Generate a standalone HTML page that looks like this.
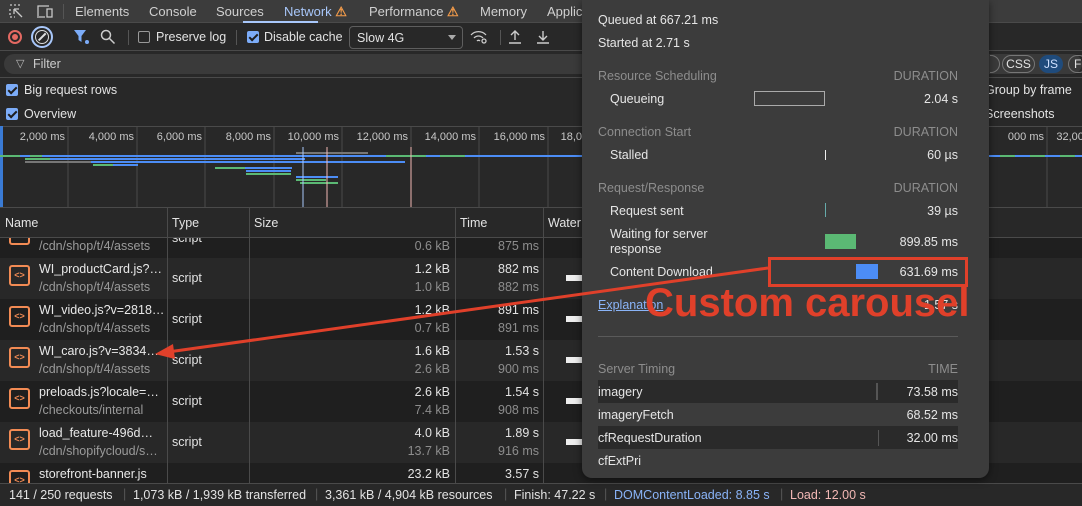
<!DOCTYPE html>
<html><head><meta charset="utf-8"><style>
*{box-sizing:border-box;margin:0;padding:0}
body{width:1082px;height:506px;overflow:hidden;background:#282828;font-family:"Liberation Sans",sans-serif;font-size:12.5px;color:#e3e3e3;position:relative}
.abs{position:absolute}
.tabs{top:0;left:0;width:1082px;height:23px;background:#3c3c3c;border-bottom:1px solid #4a4a4a}
.tabs span{position:absolute;top:4px;font-size:13px;color:#d0d0d0}
.tb{top:24px;left:0;width:1082px;height:27px;background:#282828;border-bottom:1px solid #4a4a4a}
.cb{display:inline-block;width:12px;height:12px;border-radius:2px;background:#7cacf8;position:absolute}
.cb:after{content:"";position:absolute;left:4px;top:1px;width:3px;height:7px;border:solid #1e1e1e;border-width:0 2px 2px 0;transform:rotate(45deg)}
.row{position:absolute;left:0;width:1082px;height:41px}
.ic{position:absolute;left:9px;width:21px;height:21px;border:2px solid #f28b54;border-radius:3px;color:#f28b54;font-size:9px;font-weight:bold;text-align:center;line-height:17px}
.n1{position:absolute;left:39px;color:#e8e8e8}
.n2{position:absolute;left:39px;color:#9a9a9a}
.r{position:absolute;text-align:right}
.pop{left:582px;top:0;width:407px;height:478px;background:#3c3c3c;border-radius:0 0 10px 10px;box-shadow:0 2px 8px rgba(0,0,0,.5)}
.pop div{position:absolute}
.g{color:#8d8d8d}
.w{color:#e6e6e6}
</style></head><body>
<div class="abs tabs">
<svg class="abs" style="left:9px;top:4px" width="16" height="16" viewBox="0 0 16 16" fill="none" stroke="#c8c8c8" stroke-width="1.3"><path d="M1 1h2M5 1h2M9 1h2M1 5v2M1 9v2M1 13h2M5 13h1M5 5l8 8M5 5h5M5 5v5"/></svg>
<svg class="abs" style="left:36px;top:4px" width="18" height="15" viewBox="0 0 18 15" fill="none" stroke="#c8c8c8" stroke-width="1.3"><path d="M2 12V2h11M1 13h8M11 5h5v8h-5z"/></svg>
<div class="abs" style="left:63px;top:4px;width:1px;height:15px;background:#555"></div>
<span style="left:75px">Elements</span><span style="left:149px">Console</span><span style="left:216px">Sources</span>
<span style="left:284px;color:#a8c7fa">Network <b style="color:#f29b4a">⚠</b></span>
<span style="left:369px">Performance <b style="color:#f29b4a">⚠</b></span><span style="left:480px">Memory</span><span style="left:547px">Applic</span>
<div class="abs" style="left:243px;top:21px;width:75px;height:2px;background:#a8c7fa"></div>
</div>
<div class="abs tb">
<div class="abs" style="left:8px;top:6px;width:14px;height:14px;border-radius:50%;border:2px solid #e46962"><div class="abs" style="left:2px;top:2px;width:6px;height:6px;border-radius:50%;background:#e46962"></div></div>
<div class="abs" style="left:31px;top:2px;width:22px;height:22px;border-radius:50%;border:2px solid #a8c7fa"></div>
<div class="abs" style="left:35px;top:6px;width:14px;height:14px;border-radius:50%;border:1.5px solid #ddd"></div>
<div class="abs" style="left:37px;top:12px;width:10px;height:1.5px;background:#ddd;transform:rotate(-45deg)"></div>
<svg class="abs" style="left:74px;top:6px" width="16" height="15"><path d="M0 0h12l-4.5 6v6l-3-2V6z" fill="#7cacf8"/><circle cx="13" cy="12" r="2" fill="#7cacf8"/></svg>
<svg class="abs" style="left:100px;top:5px" width="16" height="16" fill="none" stroke="#ccc" stroke-width="1.5"><circle cx="6" cy="6" r="4.5"/><path d="M9.5 9.5l5 5"/></svg>
<div class="abs" style="left:128px;top:6px;width:1px;height:15px;background:#555"></div>
<div class="abs" style="left:138px;top:7px;width:12px;height:12px;border:1.3px solid #999;border-radius:2px"></div>
<span class="abs" style="left:156px;top:6px">Preserve log</span>
<div class="abs" style="left:236px;top:6px;width:1px;height:15px;background:#555"></div>
<span class="cb" style="left:247px;top:7px"></span>
<span class="abs" style="left:264px;top:6px">Disable cache</span>
<div class="abs" style="left:349px;top:2px;width:114px;height:23px;border:1px solid #5e5e5e;border-radius:4px"><span class="abs" style="left:7px;top:4px">Slow 4G</span><span class="abs" style="right:6px;top:8px;border:4px solid transparent;border-top:5px solid #aaa"></span></div>
<svg class="abs" style="left:470px;top:5px" width="18" height="16" fill="none" stroke="#ccc" stroke-width="1.3"><path d="M1 6a10 10 0 0 1 15 0M4 9a6 6 0 0 1 9 0M7 12a2 2 0 0 1 3 0"/><circle cx="14" cy="12" r="2"/></svg>
<div class="abs" style="left:500px;top:6px;width:1px;height:15px;background:#555"></div>
<svg class="abs" style="left:508px;top:5px" width="14" height="16" fill="none" stroke="#ccc" stroke-width="1.4"><path d="M7 11V2M3 6l4-4 4 4M1 14h12"/></svg>
<svg class="abs" style="left:536px;top:5px" width="14" height="16" fill="none" stroke="#ccc" stroke-width="1.4"><path d="M7 2v9M3 7l4 4 4-4M1 14h12"/></svg>
</div>
<div class="abs" style="left:4px;top:54px;width:1078px;height:20px;background:#3a3a3a;border-radius:10px"></div>
<span class="abs" style="left:16px;top:57px;color:#bbb;font-size:11px">▽</span>
<span class="abs" style="left:33px;top:57px;color:#ccc">Filter</span>
<div class="abs" style="left:0;top:77px;width:1082px;height:1px;background:#4a4a4a"></div>
<span class="cb" style="left:6px;top:84px"></span><span class="abs" style="left:24px;top:83px">Big request rows</span>
<span class="cb" style="left:6px;top:108px"></span><span class="abs" style="left:24px;top:107px">Overview</span>
<div class="abs" style="left:990px;top:55px;width:10px;height:18px;border:1px solid #777;border-left:none;border-radius:0 9px 9px 0"></div>
<div class="abs" style="left:1002px;top:55px;width:33px;height:18px;border:1px solid #777;border-radius:9px;font-size:12px;text-align:center;line-height:16px">CSS</div>
<div class="abs" style="left:1039px;top:55px;width:24px;height:18px;background:#1f4b7c;border-radius:9px;font-size:12px;text-align:center;line-height:18px;color:#cfe0ff">JS</div>
<div class="abs" style="left:1068px;top:55px;width:20px;height:18px;border:1px solid #777;border-radius:9px;font-size:12px;padding-left:5px;line-height:16px">F</div>
<span class="abs" style="left:985px;top:83px">Group by frame</span><span class="abs" style="left:985px;top:107px">Screenshots</span>
<div class="abs" style="left:0;top:126px;width:1082px;height:1px;background:#4a4a4a"></div>
<div class="abs" style="left:0;top:126px;width:3px;height:81px;background:#3a7bd5"></div>
<svg class="abs" style="left:0;top:127px" width="1082" height="80">
<g stroke="#4a4a4a"><path d="M68 0v80M137 0v80M205 0v80M274 0v80M342 0v80M411 0v80M479 0v80M548 0v80M1047 0v80"/></g>
<g fill="#c8c8c8" font-family="Liberation Sans" font-size="11" text-anchor="end"><text x="65" y="13">2,000 ms</text><text x="134" y="13">4,000 ms</text><text x="202" y="13">6,000 ms</text><text x="271" y="13">8,000 ms</text><text x="339" y="13">10,000 ms</text><text x="408" y="13">12,000 ms</text><text x="476" y="13">14,000 ms</text><text x="545" y="13">16,000 ms</text><text x="582" y="13">18,0</text><text x="1044" y="13">000 ms</text><text x="1090" y="13">32,000</text></g>
<rect x="0" y="28" width="1082" height="2" fill="#4c8df6"/><g fill="#5bb974"><rect x="0" y="28" width="20" height="2"/><rect x="30" y="28" width="12" height="2"/><rect x="386" y="28" width="40" height="2"/><rect x="440" y="28" width="25" height="2"/><rect x="1000" y="28" width="15" height="2"/><rect x="1030" y="28" width="15" height="2"/><rect x="1060" y="28" width="15" height="2"/></g>
<rect x="25" y="31" width="280" height="2" fill="#4c8df6"/><rect x="25" y="31" width="25" height="2" fill="#5bb974"/><rect x="25" y="34" width="380" height="2" fill="#4c8df6"/><rect x="25" y="34" width="66" height="2" fill="#777"/>
<rect x="93" y="37" width="45" height="2" fill="#4c8df6"/><rect x="93" y="37" width="20" height="2" fill="#5bb974"/>
<rect x="296" y="25" width="72" height="2" fill="#777"/>
<rect x="215" y="40" width="77" height="2" fill="#4c8df6"/><rect x="215" y="40" width="30" height="2" fill="#5bb974"/><rect x="246" y="43" width="45" height="2" fill="#4c8df6"/><rect x="246" y="46" width="45" height="2" fill="#5bb974"/>
<rect x="296" y="49" width="42" height="2" fill="#4c8df6"/><rect x="296" y="52" width="30" height="2" fill="#5bb974"/><rect x="300" y="55" width="38" height="2" fill="#5bb974"/>
<path d="M303 20v60" stroke="#a8c7fa"/><path d="M327 20v60M411 20v60" stroke="#f2b8b5"/>
</svg>
<div class="abs" style="left:0;top:207px;width:1082px;height:1px;background:#4a4a4a"></div>
<div class="row" style="top:238px;background:#1f1f1f;height:20px"></div>
<div class="row" style="top:258px;background:#282828"></div>
<div class="row" style="top:299px;background:#1f1f1f"></div>
<div class="row" style="top:340px;background:#282828"></div>
<div class="row" style="top:381px;background:#1f1f1f"></div>
<div class="row" style="top:422px;background:#282828"></div>
<div class="row" style="top:463px;background:#1f1f1f;height:20px"></div>
<div class="abs" style="left:0;top:208px;width:1082px;height:30px;background:#282828;border-bottom:1px solid #4a4a4a"></div>
<span class="abs" style="left:5px;top:216px">Name</span><span class="abs" style="left:172px;top:216px">Type</span><span class="abs" style="left:254px;top:216px">Size</span><span class="abs" style="left:460px;top:216px">Time</span><span class="abs" style="left:548px;top:216px">Water</span>
<div class="abs" style="left:0;top:238px;width:1082px;height:245px;font-size:12.5px;overflow:hidden">
<div class="ic" style="top:-14px">&lt;&gt;</div><div class="abs" style="left:172px;top:-7px">script</div>
<div class="n2" style="top:1px">/cdn/shop/t/4/assets</div><div class="r g" style="right:632px;top:1px">0.6 kB</div><div class="r g" style="right:543px;top:1px">875 ms</div>
<div class="ic" style="top:27px">&lt;&gt;</div><div class="n1" style="top:24px">WI_productCard.js?…</div><div class="n2" style="top:42px">/cdn/shop/t/4/assets</div><div class="abs" style="left:172px;top:33px">script</div><div class="r" style="right:632px;top:24px">1.2 kB</div><div class="r g" style="right:632px;top:42px">1.0 kB</div><div class="r" style="right:543px;top:24px">882 ms</div><div class="r g" style="right:543px;top:42px">882 ms</div>
<div class="ic" style="top:68px">&lt;&gt;</div><div class="n1" style="top:65px">WI_video.js?v=2818…</div><div class="n2" style="top:83px">/cdn/shop/t/4/assets</div><div class="abs" style="left:172px;top:74px">script</div><div class="r" style="right:632px;top:65px">1.2 kB</div><div class="r g" style="right:632px;top:83px">0.7 kB</div><div class="r" style="right:543px;top:65px">891 ms</div><div class="r g" style="right:543px;top:83px">891 ms</div>
<div class="ic" style="top:109px">&lt;&gt;</div><div class="n1" style="top:106px">WI_caro.js?v=3834…</div><div class="n2" style="top:124px">/cdn/shop/t/4/assets</div><div class="abs" style="left:172px;top:115px">script</div><div class="r" style="right:632px;top:106px">1.6 kB</div><div class="r g" style="right:632px;top:124px">2.6 kB</div><div class="r" style="right:543px;top:106px">1.53 s</div><div class="r g" style="right:543px;top:124px">900 ms</div>
<div class="ic" style="top:150px">&lt;&gt;</div><div class="n1" style="top:147px">preloads.js?locale=…</div><div class="n2" style="top:165px">/checkouts/internal</div><div class="abs" style="left:172px;top:156px">script</div><div class="r" style="right:632px;top:147px">2.6 kB</div><div class="r g" style="right:632px;top:165px">7.4 kB</div><div class="r" style="right:543px;top:147px">1.54 s</div><div class="r g" style="right:543px;top:165px">908 ms</div>
<div class="ic" style="top:191px">&lt;&gt;</div><div class="n1" style="top:188px">load_feature-496d…</div><div class="n2" style="top:206px">/cdn/shopifycloud/s…</div><div class="abs" style="left:172px;top:197px">script</div><div class="r" style="right:632px;top:188px">4.0 kB</div><div class="r g" style="right:632px;top:206px">13.7 kB</div><div class="r" style="right:543px;top:188px">1.89 s</div><div class="r g" style="right:543px;top:206px">916 ms</div>
<div class="ic" style="top:232px">&lt;&gt;</div><div class="n1" style="top:229px">storefront-banner.js</div><div class="r" style="right:632px;top:229px">23.2 kB</div><div class="r" style="right:543px;top:229px">3.57 s</div>
<div class="abs" style="left:566px;top:37px;width:16px;height:6px;background:#eee"></div><div class="abs" style="left:566px;top:78px;width:16px;height:6px;background:#eee"></div><div class="abs" style="left:566px;top:119px;width:16px;height:6px;background:#eee"></div><div class="abs" style="left:566px;top:160px;width:16px;height:6px;background:#eee"></div><div class="abs" style="left:566px;top:201px;width:16px;height:6px;background:#eee"></div>
</div>
<div class="abs" style="left:167px;top:208px;width:1px;height:275px;background:#4a4a4a"></div>
<div class="abs" style="left:249px;top:208px;width:1px;height:275px;background:#4a4a4a"></div>
<div class="abs" style="left:455px;top:208px;width:1px;height:275px;background:#4a4a4a"></div>
<div class="abs" style="left:543px;top:208px;width:1px;height:275px;background:#4a4a4a"></div>
<div class="abs" style="left:0;top:483px;width:1082px;height:23px;background:#282828;border-top:1px solid #4a4a4a;font-size:12.5px">
<span class="abs" style="left:9px;top:4px">141 / 250 requests</span><span class="abs" style="left:123px;top:3px;color:#555">|</span>
<span class="abs" style="left:133px;top:4px">1,073 kB / 1,939 kB transferred</span><span class="abs" style="left:315px;top:3px;color:#555">|</span>
<span class="abs" style="left:325px;top:4px">3,361 kB / 4,904 kB resources</span><span class="abs" style="left:504px;top:3px;color:#555">|</span>
<span class="abs" style="left:514px;top:4px">Finish: 47.22 s</span><span class="abs" style="left:604px;top:3px;color:#555">|</span>
<span class="abs" style="left:614px;top:4px;color:#8ab4f8">DOMContentLoaded: 8.85 s</span><span class="abs" style="left:780px;top:3px;color:#555">|</span>
<span class="abs" style="left:790px;top:4px;color:#f2b8b5">Load: 12.00 s</span>
</div>
<div class="abs pop">
<div class="w" style="left:16px;top:13px">Queued at 667.21 ms</div>
<div class="w" style="left:16px;top:36px">Started at 2.71 s</div>
<div class="g" style="left:16px;top:69px">Resource Scheduling</div><div class="g" style="right:31px;top:69px">DURATION</div>
<div class="w" style="left:28px;top:92px">Queueing</div><div style="left:172px;top:91px;width:71px;height:15px;border:1px solid #aaa"></div><div class="w" style="right:31px;top:92px">2.04 s</div>
<div class="g" style="left:16px;top:125px">Connection Start</div><div class="g" style="right:31px;top:125px">DURATION</div>
<div class="w" style="left:28px;top:148px">Stalled</div><div style="left:243px;top:150px;width:1px;height:10px;background:#eee"></div><div class="w" style="right:31px;top:148px">60 µs</div>
<div class="g" style="left:16px;top:181px">Request/Response</div><div class="g" style="right:31px;top:181px">DURATION</div>
<div class="w" style="left:28px;top:204px">Request sent</div><div style="left:243px;top:203px;width:1px;height:14px;background:#6aa"></div><div class="w" style="right:31px;top:204px">39 µs</div>
<div class="w" style="left:28px;top:227px;line-height:15px">Waiting for server<br>response</div><div style="left:243px;top:234px;width:31px;height:15px;background:#5bb974"></div><div class="w" style="right:31px;top:235px">899.85 ms</div>
<div class="w" style="left:28px;top:265px">Content Download</div><div style="left:274px;top:264px;width:22px;height:15px;background:#4c8df6"></div><div class="w" style="right:31px;top:265px">631.69 ms</div>
<div style="left:16px;top:298px;color:#8ab4f8;text-decoration:underline">Explanation</div><div class="w" style="right:31px;top:298px">1.57 s</div>
<div style="left:16px;top:336px;width:360px;height:1px;background:#5a5a5a"></div>
<div class="g" style="left:16px;top:362px">Server Timing</div><div class="g" style="right:31px;top:362px">TIME</div>
<div style="left:16px;top:380px;width:360px;height:23px;background:#2a2a2a"></div>
<div style="left:16px;top:426px;width:360px;height:23px;background:#2a2a2a"></div>
<div class="w" style="left:16px;top:385px">imagery</div><div style="left:294px;top:383px;width:2px;height:17px;background:#555"></div><div class="w" style="right:31px;top:385px">73.58 ms</div>
<div class="w" style="left:16px;top:408px">imageryFetch</div><div class="w" style="right:31px;top:408px">68.52 ms</div>
<div class="w" style="left:16px;top:431px">cfRequestDuration</div><div style="left:296px;top:430px;width:1px;height:16px;background:#555"></div><div class="w" style="right:31px;top:431px">32.00 ms</div>
<div class="w" style="left:16px;top:454px">cfExtPri</div>
</div>
<div class="abs" style="left:768px;top:257px;width:200px;height:30px;border:3px solid #e0402a"></div>
<svg class="abs" style="left:0;top:0" width="1082" height="506"><path d="M768 268L168 352" stroke="#e0402a" stroke-width="3"/><path d="M155 354l18-10 2 15z" fill="#e0402a"/></svg>
<div class="abs" style="left:645px;top:281px;font-size:40px;font-weight:bold;color:#e0402a;letter-spacing:0px">Custom carousel</div>
</body></html>
